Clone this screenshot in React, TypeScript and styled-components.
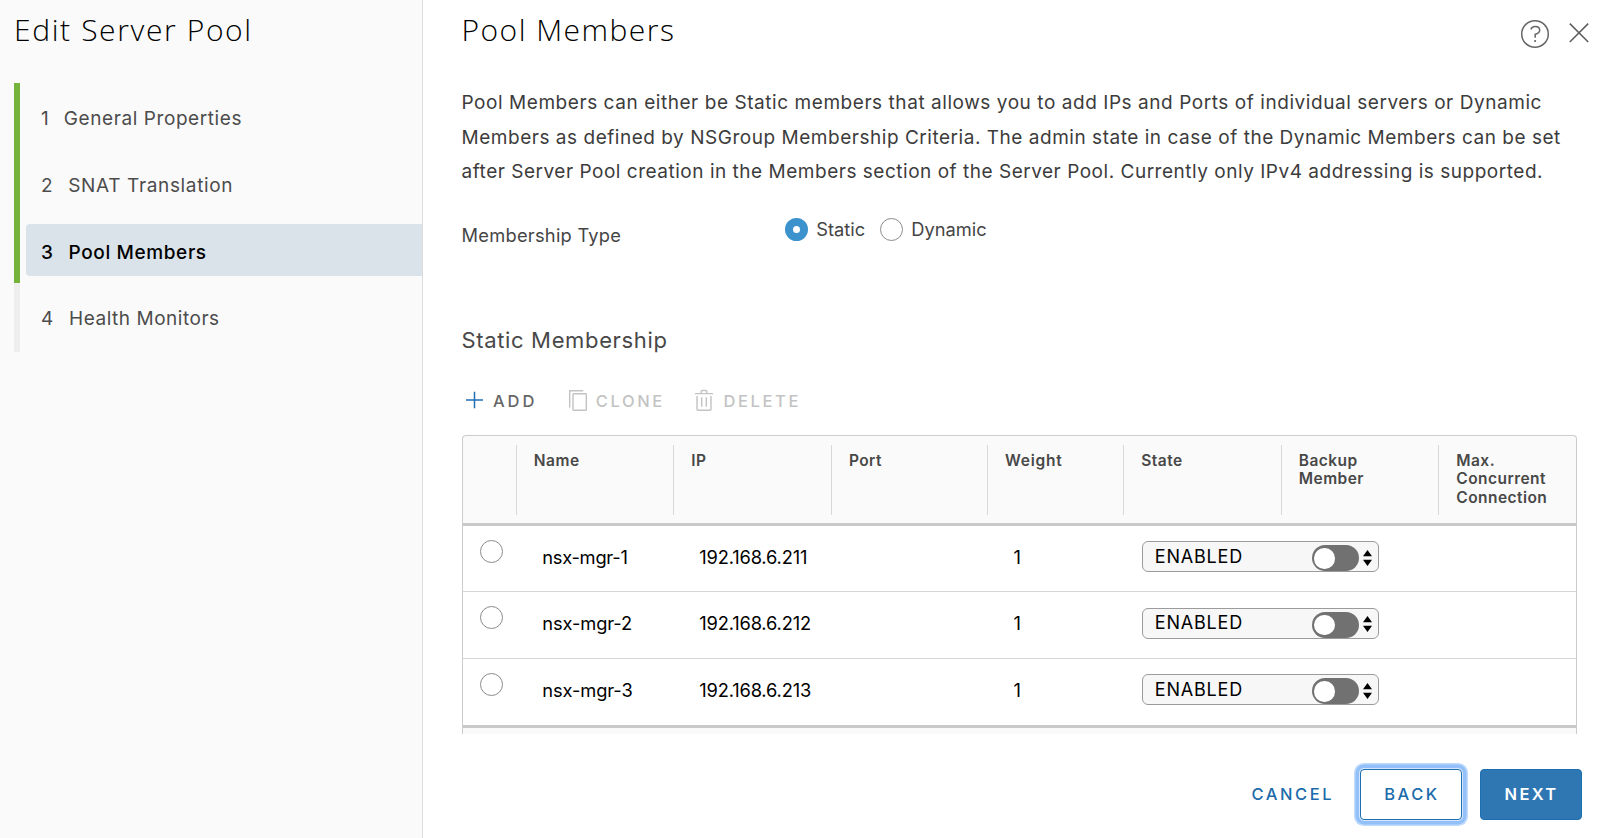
import React from 'react';
import styled, { createGlobalStyle } from 'styled-components';

const GlobalStyle = createGlobalStyle`
  * { box-sizing: border-box; }
  body {
    margin: 0;
    background: #fff;
    color: #454545;
    font-family: Inter, "Liberation Sans", sans-serif;
    font-size: 19px;
  }
  button { font-family: inherit; cursor: pointer; }
`;

const Wizard = styled.div`
  display: flex;
  width: 1600px;
  height: 838px;
  overflow: hidden;
`;

const Sidebar = styled.aside`
  flex: none;
  width: 423px;
  border-right: 1px solid #dcdcdc;
  background: #fafafa;
`;

const Title = styled.h1<{ $spacing: number }>`
  margin: 0;
  height: 59px;
  line-height: 59px;
  font-family: "Open Sans", Inter, sans-serif;
  font-size: 30px;
  font-weight: 300;
  letter-spacing: ${p => p.$spacing}px;
  color: #000;
  white-space: nowrap;
`;

const SidebarTitle = styled(Title)`
  padding-left: 14px;
`;

const StepNav = styled.nav`
  display: flex;
  gap: 6px;
  height: 269px;
  margin-top: 23.5px;
  padding-left: 14px;
`;

const Progress = styled.div`
  width: 6px;
  background: #eee;
`;

const ProgressDone = styled.div`
  height: 200px;
  background: #76b33b;
`;

const StepList = styled.div`
  flex: 1;
  display: flex;
  flex-direction: column;
  gap: 15.2px;
  padding-top: 8.3px;
`;

const Step = styled.div<{ $active?: boolean; $gap: number; $spacing: number }>`
  display: flex;
  align-items: center;
  gap: ${p => p.$gap}px;
  height: 51.5px;
  padding: 4.5px 0 0 15px;
  border-radius: 4px 0 0 4px;
  background: ${p => (p.$active ? '#dae3e9' : 'transparent')};
  color: ${p => (p.$active ? '#000' : '#4c4c4c')};
  font-weight: ${p => (p.$active ? 500 : 400)};
  letter-spacing: ${p => p.$spacing}px;
  white-space: nowrap;
`;

const Main = styled.main`
  flex: 1;
  min-width: 0;
  padding-left: 38.5px;
`;

const Header = styled.header`
  display: flex;
  justify-content: space-between;
  padding-right: 11.5px;
`;

const HeaderIcons = styled.div`
  display: flex;
  gap: 19px;
  padding-top: 19px;
`;

const Intro = styled.p`
  margin: 27.3px 0 0;
  line-height: 34.2px;
  color: #3c3c3c;
  white-space: nowrap;
`;

const IntroLine = styled.span<{ $spacing: number }>`
  display: block;
  letter-spacing: ${p => p.$spacing}px;
`;

const FormRow = styled.div`
  display: flex;
  align-items: flex-start;
  height: 30px;
  margin-top: 29.1px;
  font-size: 18.3px;
  line-height: 24px;
  color: #454545;
`;

const FieldLabel = styled.span`
  width: 323.5px;
  padding-top: 4.7px;
  letter-spacing: 0.25px;
`;

const RadioOption = styled.label`
  display: flex;
  align-items: flex-start;
  gap: 8.2px;
  margin-right: 15px;
  line-height: 22.5px;
`;

const Radio = styled.span<{ $checked?: boolean }>`
  width: 23px;
  height: 23px;
  border-radius: 50%;
  border: ${p => (p.$checked ? '8.5px solid #3b92cc' : '1.3px solid #8b8b8b')};
  background: #fff;
`;

const SectionTitle = styled.h2`
  margin: 77px 0 0;
  height: 30px;
  line-height: 30px;
  font-size: 22px;
  font-weight: 400;
  letter-spacing: 0.65px;
  color: #484848;
`;

const Toolbar = styled.div`
  display: flex;
  height: 24px;
  margin-top: 34px;
  padding-left: 4px;
`;

const Tool = styled.button<{ $gap: number; $disabled?: boolean }>`
  display: flex;
  align-items: center;
  gap: ${p => p.$gap}px;
  margin: 0 30.3px 0 0;
  padding: 0;
  border: 0;
  background: none;
  font-size: 16.5px;
  font-weight: 500;
  line-height: 25px;
  letter-spacing: 2.6px;
  color: ${p => (p.$disabled ? '#c3c3c3' : '#666')};

  &:first-child {
    margin-right: 31.5px;
    letter-spacing: 2.9px;
  }
`;

const ToolLabel = styled.span`
  padding-top: 1px;
`;

const columns = '53.2px 157.6px 157.6px 156px 136.4px 157.5px 157.5px 1fr';

const Table = styled.div`
  width: 1115.5px;
  height: 299px;
  margin-top: 22px;
  border: 1.5px solid #ccc;
  border-bottom: 0;
  border-radius: 4px 4px 0 0;
  background: #fafafa;
  overflow: hidden;
`;

const HeadRow = styled.div`
  display: grid;
  grid-template-columns: ${columns};
  height: 89.5px;
  padding: 8.5px 0 8px;
  border-bottom: 3px solid #c9c9c9;
`;

const HeadCell = styled.div<{ $spacing?: number }>`
  padding: 7px 0 0 17px;
  border-left: 1.5px solid #d8d8d8;
  font-size: 15.5px;
  font-weight: 600;
  line-height: 18.5px;
  letter-spacing: ${p => p.$spacing ?? 0.45}px;
  color: #484848;

  &:first-child { border-left: 0; }
`;

const BodyRow = styled.div`
  display: grid;
  grid-template-columns: ${columns};
  height: 66.6px;
  border-bottom: 1px solid #d6d6d6;
  background: #fff;
  color: #000;
  font-size: 18.3px;

  &:last-child {
    height: 69px;
    border-bottom: 3.5px solid #c9c9c9;
  }
`;

const Cell = styled.div<{ $indent?: number; $spacing?: number }>`
  display: flex;
  align-items: flex-start;
  padding-left: ${p => p.$indent ?? 0}px;
  line-height: 63px;
  letter-spacing: ${p => p.$spacing ?? 0}px;
  white-space: nowrap;
`;

const RowRadio = styled(Radio)`
  margin: 14px 0 0 17.5px;
`;

const StateSelect = styled.div`
  flex: none;
  display: flex;
  align-items: center;
  justify-content: space-between;
  width: 237px;
  height: 31px;
  margin-top: 15.5px;
  padding: 0 6px 0 12px;
  border: 1.5px solid #9b9b9b;
  border-radius: 6px;
  background: #f7f7f7;
  font-size: 18px;
  line-height: 28px;
  letter-spacing: 0.82px;
`;

const Arrows = styled.svg`
  margin-top: 2px;
`;

/* The switch sits on top of the wide state select of the preceding column. */
const Toggle = styled.div`
  position: relative;
  z-index: 1;
  width: 47px;
  height: 26px;
  margin-top: 19.5px;
  padding: 3px 2.5px;
  border-radius: 13px;
  background: #717171;
`;

const Knob = styled.div`
  width: 20.5px;
  height: 20.5px;
  border-radius: 50%;
  background: #fff;
`;

const Footer = styled.footer`
  display: flex;
  justify-content: flex-end;
  align-items: center;
  margin-top: 34.5px;
  padding-right: 18.5px;
`;

const Action = styled.button<{ $kind: 'link' | 'outline' | 'solid' }>`
  width: ${p => (p.$kind === 'link' ? 84 : 102)}px;
  height: 51px;
  margin-left: ${p => (p.$kind === 'outline' ? 26.5 : 17.5)}px;
  padding: 0 0 0 2px;
  border: ${p => (p.$kind === 'link' ? '0' : '1.5px solid #1c6fb1')};
  border-radius: 4px;
  background: ${p => (p.$kind === 'solid' ? '#2e77b2' : '#fff')};
  box-shadow: ${p => (p.$kind === 'outline' ? '0 0 0 1px #d5e6fc, 0 0 0 4.5px #94c0fa, 0 0 0 6px #bfdafc' : 'none')};
  color: ${p => (p.$kind === 'solid' ? '#fff' : '#1b6bab')};
  font-size: 16.5px;
  font-weight: ${p => (p.$kind === 'solid' ? 600 : 500)};
  letter-spacing: ${p => (p.$kind === 'solid' ? 2.3 : 2.54)}px;
`;

const steps = [
  { label: 'General Properties', gap: 14.5, spacing: 0.58 },
  { label: 'SNAT Translation', gap: 15, spacing: 0.65 },
  { label: 'Pool Members', gap: 15, spacing: 0.62, active: true },
  { label: 'Health Monitors', gap: 15.3, spacing: 0.52 },
];

const members = [
  { name: 'nsx-mgr-1', ip: '192.168.6.211', spacing: -0.25 },
  { name: 'nsx-mgr-2', ip: '192.168.6.212', spacing: -0.1 },
  { name: 'nsx-mgr-3', ip: '192.168.6.213', spacing: -0.1 },
];

export default function App() {
  return (
    <Wizard>
      <GlobalStyle />
      <Sidebar>
        <SidebarTitle $spacing={1.62}>Edit Server Pool</SidebarTitle>
        <StepNav>
          <Progress><ProgressDone /></Progress>
          <StepList>
            {steps.map((s, i) => (
              <Step key={s.label} $active={s.active} $gap={s.gap} $spacing={s.spacing}>
                <span>{i + 1}</span>
                <span>{s.label}</span>
              </Step>
            ))}
          </StepList>
        </StepNav>
      </Sidebar>
      <Main>
        <Header>
          <Title $spacing={1.48}>Pool Members</Title>
          <HeaderIcons>
            <svg width="30" height="30" viewBox="0 0 30 30" fill="none" stroke="#666" strokeWidth="1.5">
              <circle cx="15" cy="15" r="13.3" />
              <path d="M10.8 10.4c1-2.1 2.6-2.8 4.4-2.8 2.6 0 4.5 1.4 4.5 3.6 0 2.4-1.9 3.3-4.5 4v3.6" />
              <circle cx="15.1" cy="22" r="1.1" fill="#666" stroke="none" />
            </svg>
            <svg width="20" height="28" viewBox="0 0 20 28" stroke="#5c5c5c" strokeWidth="1.5">
              <path d="M.8 4.6 19.2 23M19.2 4.6.8 23" />
            </svg>
          </HeaderIcons>
        </Header>
        <Intro>
          <IntroLine $spacing={0.557}>Pool Members can either be Static members that allows you to add IPs and Ports of individual servers or Dynamic</IntroLine>
          <IntroLine $spacing={0.528}>Members as defined by NSGroup Membership Criteria. The admin state in case of the Dynamic Members can be set</IntroLine>
          <IntroLine $spacing={0.517}>after Server Pool creation in the Members section of the Server Pool. Currently only IPv4 addressing is supported.</IntroLine>
        </Intro>
        <FormRow>
          <FieldLabel>Membership Type</FieldLabel>
          <RadioOption><Radio $checked />Static</RadioOption>
          <RadioOption><Radio />Dynamic</RadioOption>
        </FormRow>
        <SectionTitle>Static Membership</SectionTitle>
        <Toolbar>
          <Tool $gap={10.5}>
            <svg width="17" height="24" viewBox="0 0 17 24" stroke="#1f6fb5" strokeWidth="1.5">
              <path d="M0 11h17M8.5 2.7v16.6" />
            </svg>
            <ToolLabel>ADD</ToolLabel>
          </Tool>
          <Tool $gap={9} $disabled>
            <svg width="18" height="24" viewBox="0 0 18 24" fill="none" stroke="#c3c3c3" strokeWidth="1.4">
              <path d="M.7 18.4V1.7h13.6" />
              <rect x="4" y="4.7" width="13.3" height="16.6" rx=".6" />
            </svg>
            <ToolLabel>CLONE</ToolLabel>
          </Tool>
          <Tool $gap={10.5} $disabled>
            <svg width="18" height="24" viewBox="0 0 18 24" fill="none" stroke="#c3c3c3" strokeWidth="1.4">
              <path d="M0 4.6h18M6.2 4.4V2.6q0-1.1 1.1-1.1h3.4q1.1 0 1.1 1.1v1.8" />
              <path d="M2 7v13.2q0 1.1 1.1 1.1h11.8q1.1 0 1.1-1.1V7M6.7 8.3v9.4M11.3 8.3v9.4" />
            </svg>
            <ToolLabel>DELETE</ToolLabel>
          </Tool>
        </Toolbar>
        <Table>
          <HeadRow>
            <HeadCell />
            <HeadCell $spacing={0.57}>Name</HeadCell>
            <HeadCell>IP</HeadCell>
            <HeadCell>Port</HeadCell>
            <HeadCell $spacing={0.8}>Weight</HeadCell>
            <HeadCell>State</HeadCell>
            <HeadCell>Backup<br />Member</HeadCell>
            <HeadCell $spacing={0.45}>Max.<br />Concurrent<br />Connection</HeadCell>
          </HeadRow>
          {members.map(m => (
            <BodyRow key={m.name}>
              <Cell><RowRadio /></Cell>
              <Cell $indent={26.5} $spacing={m.spacing}>{m.name}</Cell>
              <Cell $indent={26} $spacing={-0.17}>{m.ip}</Cell>
              <Cell />
              <Cell $indent={26.5}>1</Cell>
              <Cell $indent={18.5}>
                <StateSelect>
                  ENABLED
                  <Arrows width="9" height="16" viewBox="0 0 9 16">
                    <path d="M4.5 0 9 6.3H0zM4.5 16 9 9.7H0z" />
                  </Arrows>
                </StateSelect>
              </Cell>
              <Cell $indent={31}><Toggle><Knob /></Toggle></Cell>
              <Cell />
            </BodyRow>
          ))}
        </Table>
        <Footer>
          <Action $kind="link">CANCEL</Action>
          <Action $kind="outline">BACK</Action>
          <Action $kind="solid">NEXT</Action>
        </Footer>
      </Main>
    </Wizard>
  );
}
